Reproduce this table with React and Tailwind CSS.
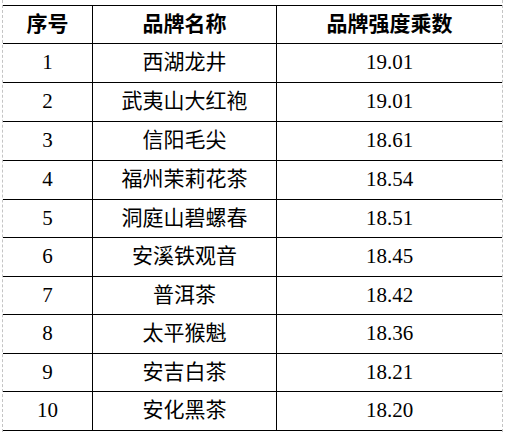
const rows = [
  { no: "1", name: "西湖龙井", value: "19.01", h: "h-[39px]" },
  { no: "2", name: "武夷山大红袍", value: "19.01", h: "h-[39px]" },
  { no: "3", name: "信阳毛尖", value: "18.61", h: "h-[39px]" },
  { no: "4", name: "福州茉莉花茶", value: "18.54", h: "h-[39px]" },
  { no: "5", name: "洞庭山碧螺春", value: "18.51", h: "h-[38px]" },
  { no: "6", name: "安溪铁观音", value: "18.45", h: "h-[39px]" },
  { no: "7", name: "普洱茶", value: "18.42", h: "h-[38px]" },
  { no: "8", name: "太平猴魁", value: "18.36", h: "h-[39px]" },
  { no: "9", name: "安吉白茶", value: "18.21", h: "h-[38px]" },
  { no: "10", name: "安化黑茶", value: "18.20", h: "h-[39px]" },
];

export default function App() {
  return (
    <div className="w-[506px] h-[435px] bg-white">
      <div className="ml-[2px] w-[501px] h-[432px] border-x border-dashed border-[#c4c4c4] pt-[5px] text-black font-[family-name:'Liberation_Serif','Noto_Sans_CJK_SC',serif]">
        <div className="grid grid-cols-[90px_184px_225px] h-[39px] border-y border-black text-[21px] font-bold">
          <div className="flex items-center justify-center border-r border-black">序号</div>
          <div className="flex items-center justify-center border-r border-black">品牌名称</div>
          <div className="flex items-center justify-center">品牌强度乘数</div>
        </div>
        {rows.map((r) => (
          <div key={r.no} className={`grid grid-cols-[90px_184px_225px] ${r.h} border-b border-black text-[21px]`}>
            <div className="flex items-center justify-center border-r border-black">{r.no}</div>
            <div className="flex items-center justify-center border-r border-black">{r.name}</div>
            <div className="flex items-center justify-center">{r.value}</div>
          </div>
        ))}
      </div>
    </div>
  );
}
